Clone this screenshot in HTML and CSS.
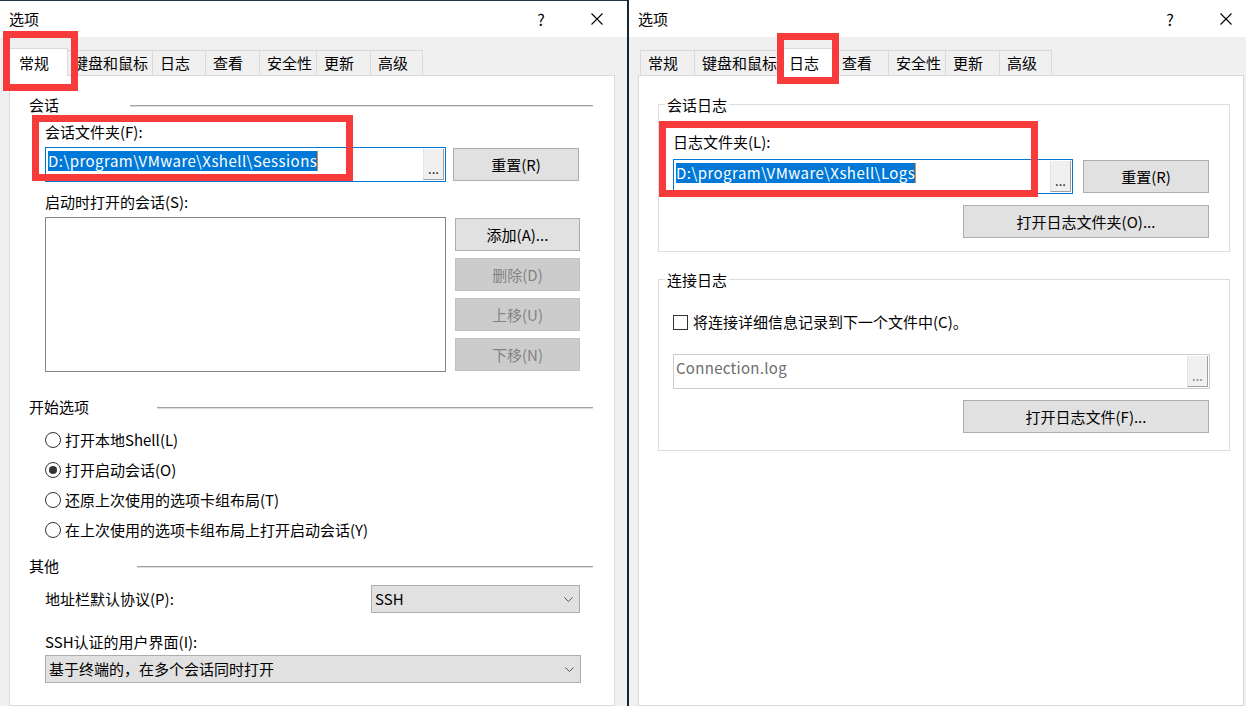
FILE: index.html
```html
<!DOCTYPE html>
<html lang="zh-CN">
<head>
	<meta charset="utf-8">
	<title>选项</title>
	<link rel="stylesheet" href="styles.css">
</head>
<body>
<div class="screen">

	<!-- 左边的对话框：常规 -->
	<div class="dialog">
		<div class="titlebar titlebar-edge">
			<span class="title">选项</span>
			<span class="tb-btn">?</span>
			<span class="tb-btn tb-close">
				<svg width="12" height="12" viewBox="0 0 12 12"><path d="M0.5 0.5L11.5 11.5M11.5 0.5L0.5 11.5" stroke="#000" stroke-width="1.1" fill="none"/></svg>
			</span>
		</div>

		<div class="tabs">
			<span class="tab w-general active">常规</span>
			<span class="tab w-keys">键盘和鼠标</span>
			<span class="tab w-log">日志</span>
			<span class="tab w-view">查看</span>
			<span class="tab w-sec">安全性</span>
			<span class="tab w-upd">更新</span>
			<span class="tab w-adv">高级</span>
		</div>

		<div class="panel panel-general">
			<div class="sec sec-session"><span class="sec-label">会话</span><span class="sec-line"></span></div>
			<div class="label lbl-folder">会话文件夹(F):</div>
			<div class="field-row">
				<div class="input focus">
					<span class="value"><span class="sel">D:\program\VMware\Xshell\Sessions</span></span>
					<span class="browse">...</span>
				</div>
				<button class="btn btn-reset">重置(R)</button>
			</div>

			<div class="label lbl-startup">启动时打开的会话(S):</div>
			<div class="list-row">
				<div class="listbox"></div>
				<div class="list-btns">
					<button class="btn">添加(A)...</button>
					<button class="btn" disabled>删除(D)</button>
					<button class="btn" disabled>上移(U)</button>
					<button class="btn" disabled>下移(N)</button>
				</div>
			</div>

			<div class="sec sec-start"><span class="sec-label">开始选项</span><span class="sec-line"></span></div>
			<div class="radios">
				<div class="radio"><span class="radio-mark"></span>打开本地Shell(L)</div>
				<div class="radio"><span class="radio-mark on"></span>打开启动会话(O)</div>
				<div class="radio"><span class="radio-mark"></span>还原上次使用的选项卡组布局(T)</div>
				<div class="radio"><span class="radio-mark"></span>在上次使用的选项卡组布局上打开启动会话(Y)</div>
			</div>

			<div class="sec sec-other"><span class="sec-label">其他</span><span class="sec-line"></span></div>
			<div class="proto-row">
				<span>地址栏默认协议(P):</span>
				<div class="combo combo-proto">
					<span class="combo-text">SSH</span>
					<svg width="9" height="5" viewBox="0 0 9 5"><path d="M0.5 0.5L4.5 4.5L8.5 0.5" stroke="#555" fill="none"/></svg>
				</div>
			</div>
			<div class="label lbl-ssh">SSH认证的用户界面(I):</div>
			<div class="combo combo-wide">
				<span class="combo-text">基于终端的，在多个会话同时打开</span>
				<svg width="9" height="5" viewBox="0 0 9 5"><path d="M0.5 0.5L4.5 4.5L8.5 0.5" stroke="#555" fill="none"/></svg>
			</div>
		</div>

		<div class="mark mark-tab-a"></div>
		<div class="mark mark-folder-a"></div>
	</div>

	<div class="divider"></div>

	<!-- 右边的对话框：日志 -->
	<div class="dialog">
		<div class="titlebar">
			<span class="title">选项</span>
			<span class="tb-btn">?</span>
			<span class="tb-btn tb-close">
				<svg width="12" height="12" viewBox="0 0 12 12"><path d="M0.5 0.5L11.5 11.5M11.5 0.5L0.5 11.5" stroke="#000" stroke-width="1.1" fill="none"/></svg>
			</span>
		</div>

		<div class="tabs">
			<span class="tab w-general">常规</span>
			<span class="tab w-keys">键盘和鼠标</span>
			<span class="tab w-log active">日志</span>
			<span class="tab w-view">查看</span>
			<span class="tab w-sec">安全性</span>
			<span class="tab w-upd">更新</span>
			<span class="tab w-adv">高级</span>
		</div>

		<div class="panel panel-log">
			<div class="group group-session">
				<div class="group-title">会话日志</div>
				<div class="label-plain lbl-logdir">日志文件夹(L):</div>
				<div class="field-row">
					<div class="input focus">
						<span class="value"><span class="sel">D:\program\VMware\Xshell\Logs</span></span>
						<span class="browse">...</span>
					</div>
					<button class="btn btn-reset">重置(R)</button>
				</div>
				<button class="btn btn-open">打开日志文件夹(O)...</button>
			</div>

			<div class="group group-conn">
				<div class="group-title">连接日志</div>
				<div class="check-row"><span class="check"></span>将连接详细信息记录到下一个文件中(C)。</div>
				<div class="input disabled">
					<span class="value">Connection.log</span>
					<span class="browse">...</span>
				</div>
				<button class="btn btn-open">打开日志文件(F)...</button>
			</div>
		</div>

		<div class="mark mark-tab-b"></div>
		<div class="mark mark-folder-b"></div>
	</div>

</div>
</body>
</html>
```

FILE: styles.css
```css
* {
	box-sizing: border-box;
}

html, body {
	margin: 0;
	padding: 0;
}

body {
	width: 1246px;
	height: 706px;
	overflow: hidden;
	background: #f0f0f0;
	color: #000;
	font-family: "Noto Sans CJK SC", sans-serif;
	font-size: 15px;
	line-height: 20px;
}

.screen {
	display: flex;
	height: 706px;
}

.dialog {
	position: relative;
	flex: none;
	width: 627px;
	height: 706px;
	display: flex;
	flex-direction: column;
	background: #f0f0f0;
}

.divider {
	flex: none;
	width: 2px;
	background: #13263a;
}

/* title bar */
.titlebar {
	flex: none;
	height: 37px;
	display: flex;
	align-items: center;
	padding-left: 9px;
	background: #fff;
}

.titlebar-edge {
	box-shadow: inset 0 1px 0 #22354a;
}

.title {
	flex: 1;
}

.tb-btn {
	width: 56px;
	display: flex;
	justify-content: center;
	align-items: center;
	font-size: 16px;
}

.tb-close {
	margin-right: 2px;
}

/* tabs */
.tabs {
	flex: none;
	display: flex;
	align-items: flex-end;
	height: 27px;
	margin-top: 11px;
	padding-left: 11px;
}

.tab {
	box-sizing: content-box;
	height: 24px;
	margin-right: -1px;
	padding-left: 7px;
	border: 1px solid #d9d9d9;
	border-bottom: 0;
	background: #f0f0f0;
	line-height: 24px;
	white-space: nowrap;
}

.tab.active {
	position: relative;
	z-index: 2;
	height: 25px;
	margin: 0 -3px -1px -2px;
	padding: 2px 2px 0 9px;
	background: #fff;
}

.w-general { width: 46px; }
.w-keys { width: 79px; }
.w-log { width: 45px; }
.w-view { width: 46px; }
.w-sec { width: 49px; }
.w-upd { width: 46px; }
.w-adv { width: 44px; }

/* tab page */
.panel {
	flex: 1;
	width: 606px;
	margin-left: 9px;
	background: #fff;
	border: 1px solid #d9d9d9;
}

.panel-general {
	padding: 0 21px 0 19px;
}

.panel-log {
	padding: 0 13px 0 19px;
}

.sec {
	display: flex;
	align-items: center;
}

.sec-line {
	flex: 1;
	height: 2px;
	margin-top: 2px;
	border-top: 1px solid #a0a0a0;
	border-bottom: 1px solid #dedede;
}

.sec-session { margin-top: 19px; }
.sec-session .sec-label { width: 101px; }

.sec-start { margin-top: 25px; }
.sec-start .sec-label { width: 128px; }

.sec-other { margin-top: 11px; }
.sec-other .sec-label { width: 108px; }

.label {
	margin-left: 16px;
}

.lbl-folder { margin-top: 7px; }
.lbl-startup { margin-top: 10px; }
.lbl-ssh { margin-top: 19px; }
.lbl-logdir { margin-top: 17px; }

.field-row {
	display: flex;
	align-items: center;
	gap: 7px;
	margin: 5px 14px 0 16px;
}

.input {
	flex: 1;
	height: 35px;
	display: flex;
	align-items: stretch;
	padding: 1px;
	border: 1px solid #7a7a7a;
	background: #fff;
}

.input.focus {
	border-color: #0078d7;
}

.value {
	flex: 1;
	display: flex;
	align-items: flex-start;
	padding: 2px 0 0 1px;
	letter-spacing: 0.45px;
	white-space: nowrap;
}

.sel {
	background: #0078d7;
	color: #fff;
	border-right: 1px solid #e8892b;
}

.browse {
	flex: none;
	width: 21px;
	display: flex;
	align-items: flex-end;
	justify-content: center;
	padding-bottom: 4px;
	background: #f0f0f0;
	border-left: 1px solid #e3e3e3;
	border-right: 1px solid #a0a0a0;
	border-bottom: 1px solid #a0a0a0;
	font-size: 13px;
	line-height: 13px;
}

.btn {
	height: 33px;
	margin: 0;
	padding: 0;
	font: inherit;
	color: #000;
	background: #e1e1e1;
	border: 1px solid #adadad;
	border-radius: 0;
}

.btn:disabled {
	background: #cccccc;
	border-color: #bfbfbf;
	color: #838383;
}

.btn-reset {
	flex: none;
	width: 126px;
}

.list-row {
	display: flex;
	align-items: flex-start;
	gap: 9px;
	margin: 5px 13px 0 16px;
}

.listbox {
	flex: 1;
	height: 155px;
	border: 1px solid #828790;
	background: #fff;
}

.list-btns {
	flex: none;
	width: 125px;
	display: flex;
	flex-direction: column;
	gap: 7px;
	margin-top: 1px;
}

.radios {
	margin: 8px 0 0 16px;
}

.radio {
	display: flex;
	align-items: center;
	height: 30px;
}

.radio-mark {
	width: 16px;
	height: 16px;
	margin-right: 4px;
	display: flex;
	align-items: center;
	justify-content: center;
	border: 1px solid #333;
	border-radius: 50%;
	background: #fff;
}

.radio-mark.on::after {
	content: "";
	width: 8px;
	height: 8px;
	border-radius: 50%;
	background: #333;
}

.proto-row {
	display: flex;
	align-items: center;
	justify-content: space-between;
	height: 28px;
	margin: 9px 13px 0 16px;
}

.combo {
	display: flex;
	align-items: center;
	height: 28px;
	padding: 0 6px 0 3px;
	background: #e1e1e1;
	border: 1px solid #adadad;
}

.combo-proto {
	width: 209px;
}

.combo-wide {
	margin: 3px 12px 0 16px;
}

.combo-text {
	flex: 1;
}

/* group boxes on the log page */
.group {
	border: 1px solid #dcdcdc;
	padding: 0 20px 13px 14px;
}

.group-session {
	margin-top: 28px;
}

.group-conn {
	margin-top: 27px;
	padding-bottom: 17px;
}

.group-title {
	width: max-content;
	margin: -10px 0 0 -8px;
	padding: 0 2px;
	background: #fff;
}

.group .field-row {
	gap: 10px;
	margin: 7px 0 0 0;
}

.btn-open {
	display: block;
	width: 246px;
	margin: 11px 0 0 auto;
}

.check-row {
	display: flex;
	align-items: center;
	margin-top: 22px;
}

.check {
	width: 15px;
	height: 15px;
	margin-right: 5px;
	border: 1px solid #333;
	background: #fff;
}

.input.disabled {
	flex: none;
	margin: 22px -1px 0 0;
	border-color: #cccccc;
}

.input.disabled .value {
	color: #6d6d6d;
	letter-spacing: 0.3px;
}

.input.disabled .browse {
	color: #6d6d6d;
}

/* red highlight frames drawn over the screenshot */
.mark {
	position: absolute;
	z-index: 5;
	border: 7px solid #f73b3b;
}

.mark-tab-a { left: 3px; top: 31px; width: 75px; height: 60px; }
.mark-folder-a { left: 32px; top: 115px; width: 321px; height: 66px; }
.mark-tab-b { left: 148px; top: 33px; width: 62px; height: 51px; }
.mark-folder-b { left: 30px; top: 121px; width: 379px; height: 76px; }
```
